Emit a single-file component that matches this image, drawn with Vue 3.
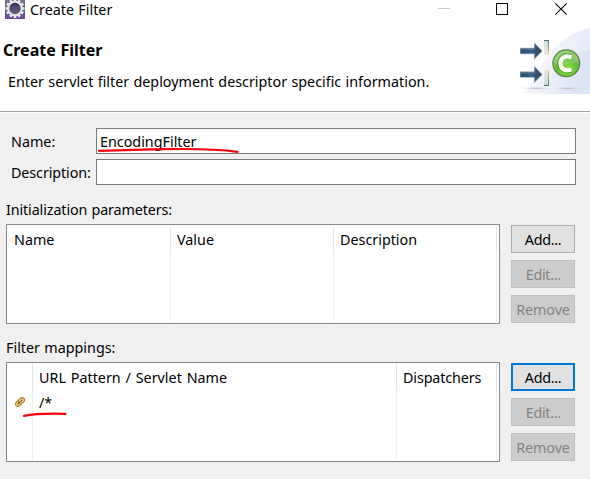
<script setup>
const sections = [
  {
    key: 'init', title: 'Initialization parameters:', focused: false,
    columns: [
      { text: 'Name', cls: 'c-name' },
      { text: 'Value', cls: 'c-value' },
      { text: 'Description', cls: 'c-desc' },
    ],
    row: null,
  },
  {
    key: 'map', title: 'Filter mappings:', focused: true,
    columns: [
      { text: '', cls: 'c-icon' },
      { text: 'URL Pattern / Servlet Name', cls: 'c-url' },
      { text: 'Dispatchers', cls: 'c-disp' },
    ],
    row: '/*',
  },
]
const teeth = Array.from({ length: 12 }, (_, i) => i * 30)
</script>

<template>
  <div class="dialog">
    <header class="head">
      <div class="titlebar">
        <svg class="app-icon" width="20" height="19" viewBox="0 0 20 19">
          <defs>
            <linearGradient id="gearBg" x1="0" y1="0" x2="0" y2="1">
              <stop offset="0" stop-color="#77728a" /><stop offset=".5" stop-color="#655581" /><stop offset="1" stop-color="#6a4a9c" />
            </linearGradient>
            <linearGradient id="gearIn" x1="0" y1="0" x2="0" y2="1">
              <stop offset="0" stop-color="#302d4c" /><stop offset="1" stop-color="#6b6788" />
            </linearGradient>
          </defs>
          <rect width="20" height="19" fill="url(#gearBg)" />
          <rect v-for="a in teeth" :key="a" x="8.7" y="-1" width="2.6" height="4" fill="#eeecee" :transform="`rotate(${a} 10 8.5)`" />
          <circle cx="10" cy="8.5" r="6.7" fill="url(#gearIn)" stroke="#e6e3e5" stroke-width="2.1" />
          <path d="M5 7h10M4.5 9h11M5 11h10" stroke="#5f5b7b" stroke-width=".8" />
        </svg>
        <span class="t t-title">Create Filter</span>
        <svg class="win" width="132" height="19" viewBox="0 0 132 19" fill="none">
          <path d="M0 8.5h12" stroke="#ccc" />
          <rect x="58.5" y="3.5" width="11" height="11" stroke="#000" />
          <path d="M117.3 3.3l11.4 11.4M128.7 3.3l-11.4 11.4" stroke="#000" stroke-width="1.1" />
        </svg>
      </div>
      <div class="banner">
        <div class="copy">
          <h1 class="t t-head">Create Filter</h1>
          <p class="t t-sub">Enter servlet filter deployment descriptor specific information.</p>
        </div>
        <svg class="hero" width="74" height="67" viewBox="516 27 74 67">
          <defs>
            <linearGradient id="sky" x1="0" y1="0" x2="1" y2=".35">
              <stop offset="0" stop-color="#fff" /><stop offset=".5" stop-color="#f4f6fc" /><stop offset="1" stop-color="#e4e9f7" />
            </linearGradient>
            <linearGradient id="haze" x1="0" y1="0" x2="1" y2="0">
              <stop offset="0" stop-color="#dde5f6" stop-opacity="0" /><stop offset="1" stop-color="#d6dff4" />
            </linearGradient>
            <linearGradient id="arrow" x1="0" y1="0" x2="1" y2="0">
              <stop offset="0" stop-color="#244d72" /><stop offset=".45" stop-color="#356388" /><stop offset="1" stop-color="#3e4357" />
            </linearGradient>
            <linearGradient id="bar" x1="0" y1="0" x2="0" y2="1">
              <stop offset="0" stop-color="#c3dce2" /><stop offset="1" stop-color="#f4e6dc" />
            </linearGradient>
            <linearGradient id="edge" x1="0" y1="0" x2="0" y2="1">
              <stop offset="0" stop-color="#55756f" /><stop offset=".6" stop-color="#a5a680" /><stop offset="1" stop-color="#ecd5b5" />
            </linearGradient>
            <radialGradient id="ball" cx=".55" cy=".75" r=".7">
              <stop offset="0" stop-color="#8be54c" /><stop offset=".55" stop-color="#60bd35" /><stop offset="1" stop-color="#8ac96c" />
            </radialGradient>
            <radialGradient id="shade">
              <stop offset="0" stop-color="#b9b3c6" /><stop offset="1" stop-color="#e7eaf5" stop-opacity="0" />
            </radialGradient>
          </defs>
          <path d="M518 94C532 91 535 71 547 57C558 43 573 31 590 28V94Z" fill="url(#sky)" />
          <path d="M590 50C567 53 548 66 533 94H590Z" fill="url(#haze)" opacity=".6" />
          <ellipse cx="536" cy="88.3" rx="18" ry="1.7" fill="url(#shade)" />
          <ellipse cx="568" cy="88.3" rx="18" ry="1.7" fill="url(#shade)" />
          <g v-for="dy in [0, 23.5]" :key="dy" :transform="`translate(0 ${dy})`">
            <path d="M520 47.8h14V42l8.8 9.1L534 60v-5.7h-14z" fill="#a8b3c3" />
            <path d="M520.5 48.5h14.2v-4.7l7 7.3-7 7.2v-4.7h-14.2z" fill="url(#arrow)" />
            <path d="M521 49.2h14" stroke="#6d8399" stroke-width=".9" />
          </g>
          <rect x="544" y="40" width="4" height="15" fill="url(#bar)" />
          <path d="M544 40.5h5" stroke="#526f72" />
          <rect x="548" y="40" width="1" height="15" fill="url(#edge)" />
          <g transform="translate(0 126) scale(1 -1)">
            <rect x="544" y="40" width="4" height="16" fill="url(#bar)" />
            <path d="M544 40.5h5" stroke="#526f72" />
            <rect x="548" y="40" width="1" height="16" fill="url(#edge)" />
          </g>
          <circle cx="566.3" cy="63.3" r="13.4" fill="url(#ball)" stroke="#5c873f" stroke-width="1.2" />
          <path d="M554.5 63C554 47 578 47 578 62C570 64 562 66 554.5 63Z" fill="#fff" opacity=".16" />
          <path d="M571.5 56.8C565.5 54 560 57.6 560 63.3C560 69 565.2 72.5 571.5 69.8" fill="none" stroke="#479322" stroke-width="5.4" opacity=".65" />
          <path d="M571.5 57.2C565.2 54.8 560.5 58 560.5 63.3C560.5 68.8 565.2 71.8 571.5 69.4" fill="none" stroke="#fffff5" stroke-width="4.2" />
        </svg>
      </div>
    </header>

    <main class="body">
      <div class="form">
        <label class="t t-name">Name:</label>
        <div class="input">
          <span class="t t-value">EncodingFilter</span>
          <svg class="mark-name" width="144" height="8" viewBox="0 0 144 8">
            <path d="M2 4.8C32 3.9 47 3.6 66 3.2C94 2.6 118 2.8 140.5 5.8" fill="none" stroke="#f8000b" stroke-width="2.2" stroke-linecap="round" />
          </svg>
        </div>
        <label class="t t-description">Description:</label>
        <div class="input"></div>
      </div>

      <section v-for="s in sections" :key="s.key" class="section" :class="s.key">
        <h2 class="t section-title">{{ s.title }}</h2>
        <div class="content">
          <div class="table">
            <div v-for="c in s.columns" :key="c.cls" class="col" :class="c.cls">
              <div class="th"><span class="t">{{ c.text }}</span></div>
              <div v-if="s.row && c.cls === 'c-icon'" class="td icon-cell">
                <svg width="12" height="12" viewBox="0 0 12 12">
                  <g transform="rotate(-43 6 6)" fill="#f6dfa0" stroke="#a87819" stroke-width="1.1">
                    <ellipse cx="4" cy="6" rx="3.3" ry="2.5" />
                    <ellipse cx="8" cy="6" rx="3.3" ry="2.5" />
                    <path d="M2.5 6h7" stroke="#765018" />
                  </g>
                </svg>
              </div>
              <div v-if="s.row && c.cls === 'c-url'" class="td"><span class="t t-row">{{ s.row }}</span></div>
            </div>
            <svg v-if="s.row" class="mark-row" width="46" height="7" viewBox="0 0 46 7">
              <path d="M2 4.8C14 2.4 28 2.3 43.5 2.8" fill="none" stroke="#f8000b" stroke-width="2.2" stroke-linecap="round" />
            </svg>
          </div>
          <div class="buttons">
            <button class="btn" :class="{ focused: s.focused }"><span class="t b-add">Add...</span></button>
            <button class="btn" disabled><span class="t b-edit">Edit...</span></button>
            <button class="btn" disabled><span class="t b-remove">Remove</span></button>
          </div>
        </div>
      </section>
    </main>
  </div>
</template>

<style>
body { background: #f0f0f0; overflow: hidden; }
</style>

<style scoped>
* { box-sizing: border-box; }
.dialog { width: 590px; height: 479px; overflow: hidden; background: #f0f0f0; color: #000; font-family: "Noto Sans", "Open Sans", sans-serif; font-size: 15px; line-height: 20px; word-spacing: 0.6px; }
.t { display: block; white-space: nowrap; font-weight: 400; transform: scaleX(.955); transform-origin: left center; }
h1, h2, p { margin: 0; }
svg { display: block; flex: none; }
.head { height: 113px; background: #fff; border-bottom: 1px solid #fff; box-shadow: inset 0 -1px #a0a0a0; }
.titlebar { display: flex; height: 27px; align-items: flex-start; }
.app-icon { margin-left: 5px; }
.t-title { margin: -1px 0 0 5px; width: 408px; }
.banner { display: flex; justify-content: space-between; height: 67px; }
.copy { padding: 13px 0 0 3px; width: 440px; }
.t-head { font-size: 16px; font-weight: 700; transform: none; }
.t-sub { margin: 11px 0 0 5px; }
.body { padding: 15px 14px 0 6px; }
.form { display: grid; grid-template-columns: 85px 480px; grid-auto-rows: 26px; row-gap: 5px; column-gap: 0; padding-left: 5px; align-items: center; }
.t-description { letter-spacing: -0.1px; }
.input { position: relative; height: 26px; border: 1px solid #7a7a7a; background: #fff; padding: 2px 3px; }
.mark-name { position: absolute; left: 0; top: 17px; }
.section-title { height: 20px; font-size: 15px; margin-bottom: 5px; }
.section { padding-top: 14px; }
.init .section-title { letter-spacing: -0.12px; }
.map { padding-top: 13px; }
.content { display: flex; gap: 11px; }
.table { position: relative; width: 494px; height: 100px; display: flex; border: 1px solid #828790; background: #fff; padding: 1px 0 1px 1px; }
.col { border-right: 1px solid; border-image: linear-gradient(#e5e5e5 26px, #e9f1fc 26px) 1; }
.c-name { width: 163px; padding-left: 6px; }
.c-value { width: 163px; padding-left: 6px; }
.c-desc { width: 163px; padding-left: 6px; }
.c-icon { width: 25px; }
.c-url { width: 364px; padding-left: 6px; }
.c-url .th { word-spacing: 1.2px; }
.c-disp { width: 100px; padding-left: 6px; letter-spacing: -0.12px; }
.th { height: 26px; padding-top: 3px; }
.td { height: 24px; padding-top: 2px; }
.icon-cell { padding: 6px 0 0 6px; }
.mark-row { position: absolute; left: 15px; top: 48px; }
.buttons { display: grid; grid-template-rows: repeat(3, 28px); gap: 7px; padding-top: 1px; }
.btn { width: 64px; height: 28px; border: 1px solid #adadad; background: #e1e1e1; color: #000; font: inherit; padding: 0; display: flex; align-items: center; justify-content: center; }
.btn .t { transform-origin: center; }
.b-add, .b-edit { letter-spacing: -0.35px; }
.b-remove { letter-spacing: -0.1px; }
.btn:disabled { border-color: #bfbfbf; background: #ccc; color: #838383; }
.btn.focused { border: 2px solid #0078d7; }
</style>
